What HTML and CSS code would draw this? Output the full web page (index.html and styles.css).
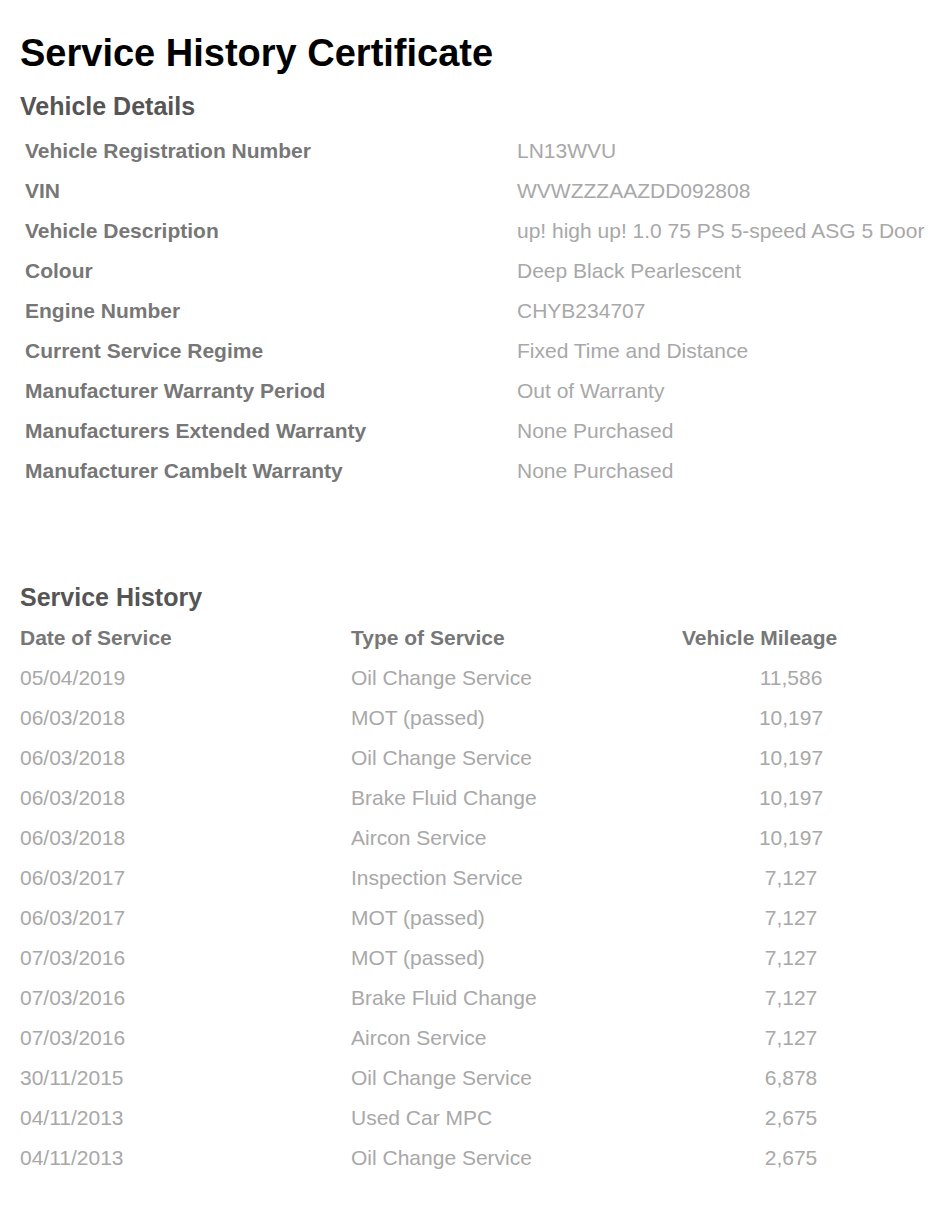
FILE: index.html
```html
<!DOCTYPE html>
<html lang="en">
<head>
<meta charset="utf-8">
<title>Service History Certificate</title>
<link rel="stylesheet" href="styles.css">
</head>
<body>
<main class="page">
  <h1 class="title">Service History Certificate</h1>

  <section class="details">
    <h2 class="section-title">Vehicle Details</h2>
    <dl class="detail-list">
      <dt>Vehicle Registration Number</dt><dd>LN13WVU</dd>
      <dt>VIN</dt><dd>WVWZZZAAZDD092808</dd>
      <dt>Vehicle Description</dt><dd>up! high up! 1.0 75 PS 5-speed ASG 5 Door</dd>
      <dt>Colour</dt><dd>Deep Black Pearlescent</dd>
      <dt>Engine Number</dt><dd>CHYB234707</dd>
      <dt>Current Service Regime</dt><dd>Fixed Time and Distance</dd>
      <dt>Manufacturer Warranty Period</dt><dd>Out of Warranty</dd>
      <dt>Manufacturers Extended Warranty</dt><dd>None Purchased</dd>
      <dt>Manufacturer Cambelt Warranty</dt><dd>None Purchased</dd>
    </dl>
  </section>

  <section class="history">
    <h2 class="section-title">Service History</h2>
    <div class="history-table">
      <div class="hrow head"><span>Date of Service</span><span>Type of Service</span><span>Vehicle Mileage</span></div>
      <div class="hrow"><span>05/04/2019</span><span>Oil Change Service</span><span class="miles">11,586</span></div>
      <div class="hrow"><span>06/03/2018</span><span>MOT (passed)</span><span class="miles">10,197</span></div>
      <div class="hrow"><span>06/03/2018</span><span>Oil Change Service</span><span class="miles">10,197</span></div>
      <div class="hrow"><span>06/03/2018</span><span>Brake Fluid Change</span><span class="miles">10,197</span></div>
      <div class="hrow"><span>06/03/2018</span><span>Aircon Service</span><span class="miles">10,197</span></div>
      <div class="hrow"><span>06/03/2017</span><span>Inspection Service</span><span class="miles">7,127</span></div>
      <div class="hrow"><span>06/03/2017</span><span>MOT (passed)</span><span class="miles">7,127</span></div>
      <div class="hrow"><span>07/03/2016</span><span>MOT (passed)</span><span class="miles">7,127</span></div>
      <div class="hrow"><span>07/03/2016</span><span>Brake Fluid Change</span><span class="miles">7,127</span></div>
      <div class="hrow"><span>07/03/2016</span><span>Aircon Service</span><span class="miles">7,127</span></div>
      <div class="hrow"><span>30/11/2015</span><span>Oil Change Service</span><span class="miles">6,878</span></div>
      <div class="hrow"><span>04/11/2013</span><span>Used Car MPC</span><span class="miles">2,675</span></div>
      <div class="hrow"><span>04/11/2013</span><span>Oil Change Service</span><span class="miles">2,675</span></div>
    </div>
  </section>
</main>
</body>
</html>
```

FILE: styles.css
```css
html, body {
  margin: 0;
  padding: 0;
  background: #ffffff;
}

body {
  font-family: "Liberation Sans", Arial, sans-serif;
  font-size: 21px;
}

.page {
  padding: 31px 0 40px 20px;
}

.title {
  margin: 0;
  font-size: 38px;
  line-height: 44px;
  font-weight: bold;
  color: #000000;
}

.section-title {
  margin: 0;
  font-size: 25px;
  line-height: 30px;
  font-weight: bold;
  color: #555555;
}

.details {
  margin-top: 16px;
}

.detail-list {
  margin: 10px 0 0 5px;
  display: grid;
  grid-template-columns: 492px auto;
}

.detail-list dt,
.detail-list dd {
  margin: 0;
  height: 40px;
  line-height: 40px;
  white-space: nowrap;
}

.detail-list dt {
  font-weight: bold;
  color: #777777;
}

.detail-list dd {
  color: #a8a8a8;
}

.history {
  margin-top: 91px;
}

.history-table {
  margin-top: 6px;
}

.hrow {
  display: grid;
  grid-template-columns: 331px 331px 218px;
  height: 40px;
  line-height: 40px;
  color: #a8a8a8;
  white-space: nowrap;
}

.hrow.head {
  font-weight: bold;
  color: #777777;
}

.hrow .miles {
  text-align: center;
}
```
